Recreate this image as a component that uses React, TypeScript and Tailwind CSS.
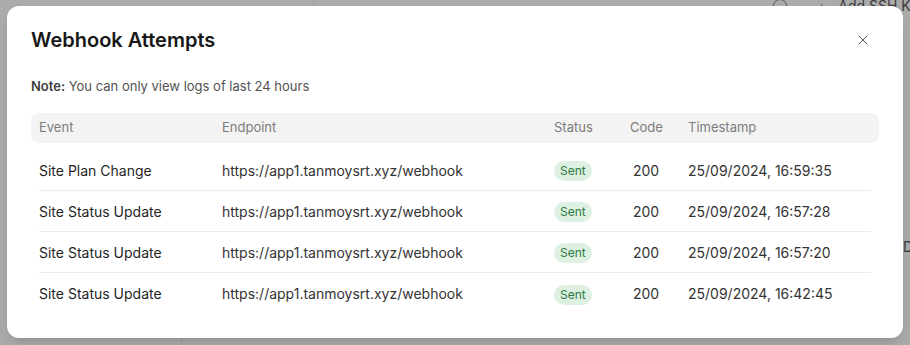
import { X } from "lucide-react";

const rows = [
  { event: "Site Plan Change", time: "25/09/2024, 16:59:35" },
  { event: "Site Status Update", time: "25/09/2024, 16:57:28" },
  { event: "Site Status Update", time: "25/09/2024, 16:57:20" },
  { event: "Site Status Update", time: "25/09/2024, 16:42:45" },
];

const cols = "grid grid-cols-[183px_332px_76px_58px_1fr] items-center";

export default function App() {
  return (
    <div
      className="relative h-[345px] w-[910px] overflow-hidden bg-[#ababab]"
      style={{ fontFamily: "Inter, 'Noto Sans', sans-serif" }}
    >
      {/* dimmed page behind the dialog */}
      <div className="absolute left-[313px] top-0 h-[8px] w-px bg-[#9f9f9f]" />
      <div className="absolute left-[181px] top-[330px] h-[15px] w-px bg-[#9f9f9f]" />
      <div className="absolute left-[773px] top-[-4px] flex items-center text-[14px] leading-5 text-[#3a3a3a]">
        <span className="h-[14px] w-[14px] rounded-full border border-[#555]" />
        <span className="ml-[30px] text-[#555]">+</span>
        <span className="ml-[12px] whitespace-nowrap">Add SSH Key</span>
      </div>
      <div className="absolute left-[903px] top-[236px] text-[14px] text-[#3a3a3a]">De</div>

      {/* dialog */}
      <div className="absolute left-[7px] top-[6px] w-[896px] rounded-xl bg-white px-6 pb-6 pt-5 shadow-lg">
        <div className="flex h-7 items-center justify-between">
          <h2 className="text-xl font-semibold text-[#171717]">Webhook Attempts</h2>
          <button className="mr-[8px] text-[#333]">
            <X size={16} strokeWidth={1.25} />
          </button>
        </div>

        <p className="mt-[22px] text-[13px] leading-5 text-[#525252]">
          <span className="font-semibold text-[#404040]">Note:</span> You can only view logs of last 24 hours
        </p>

        <div className="mt-[17px]">
          <div className={`${cols} h-[30px] rounded-lg bg-[#f3f3f3] px-2 text-[13px] text-[#7c7c7c]`}>
            <span>Event</span>
            <span>Endpoint</span>
            <span>Status</span>
            <span>Code</span>
            <span>Timestamp</span>
          </div>
          <div className="mx-2 mt-[7px]">
            {rows.map((r, i) => (
              <div
                key={i}
                className={`${cols} h-[41px] text-[14px] text-[#1f1f1f] ${
                  i < rows.length - 1 ? "border-b border-[#ebebeb]" : ""
                }`}
              >
                <span>{r.event}</span>
                <span className="text-[#333]">https://app1.tanmoysrt.xyz/webhook</span>
                <span>
                  <span className="inline-flex h-[20px] items-center rounded-full bg-[#ddf0e1] px-[6px] text-[12px] text-[#2d7a46]">
                    Sent
                  </span>
                </span>
                <span className="pl-[3px] text-[#333]">200</span>
                <span className="text-[#333]">{r.time}</span>
              </div>
            ))}
          </div>
        </div>
      </div>
    </div>
  );
}
